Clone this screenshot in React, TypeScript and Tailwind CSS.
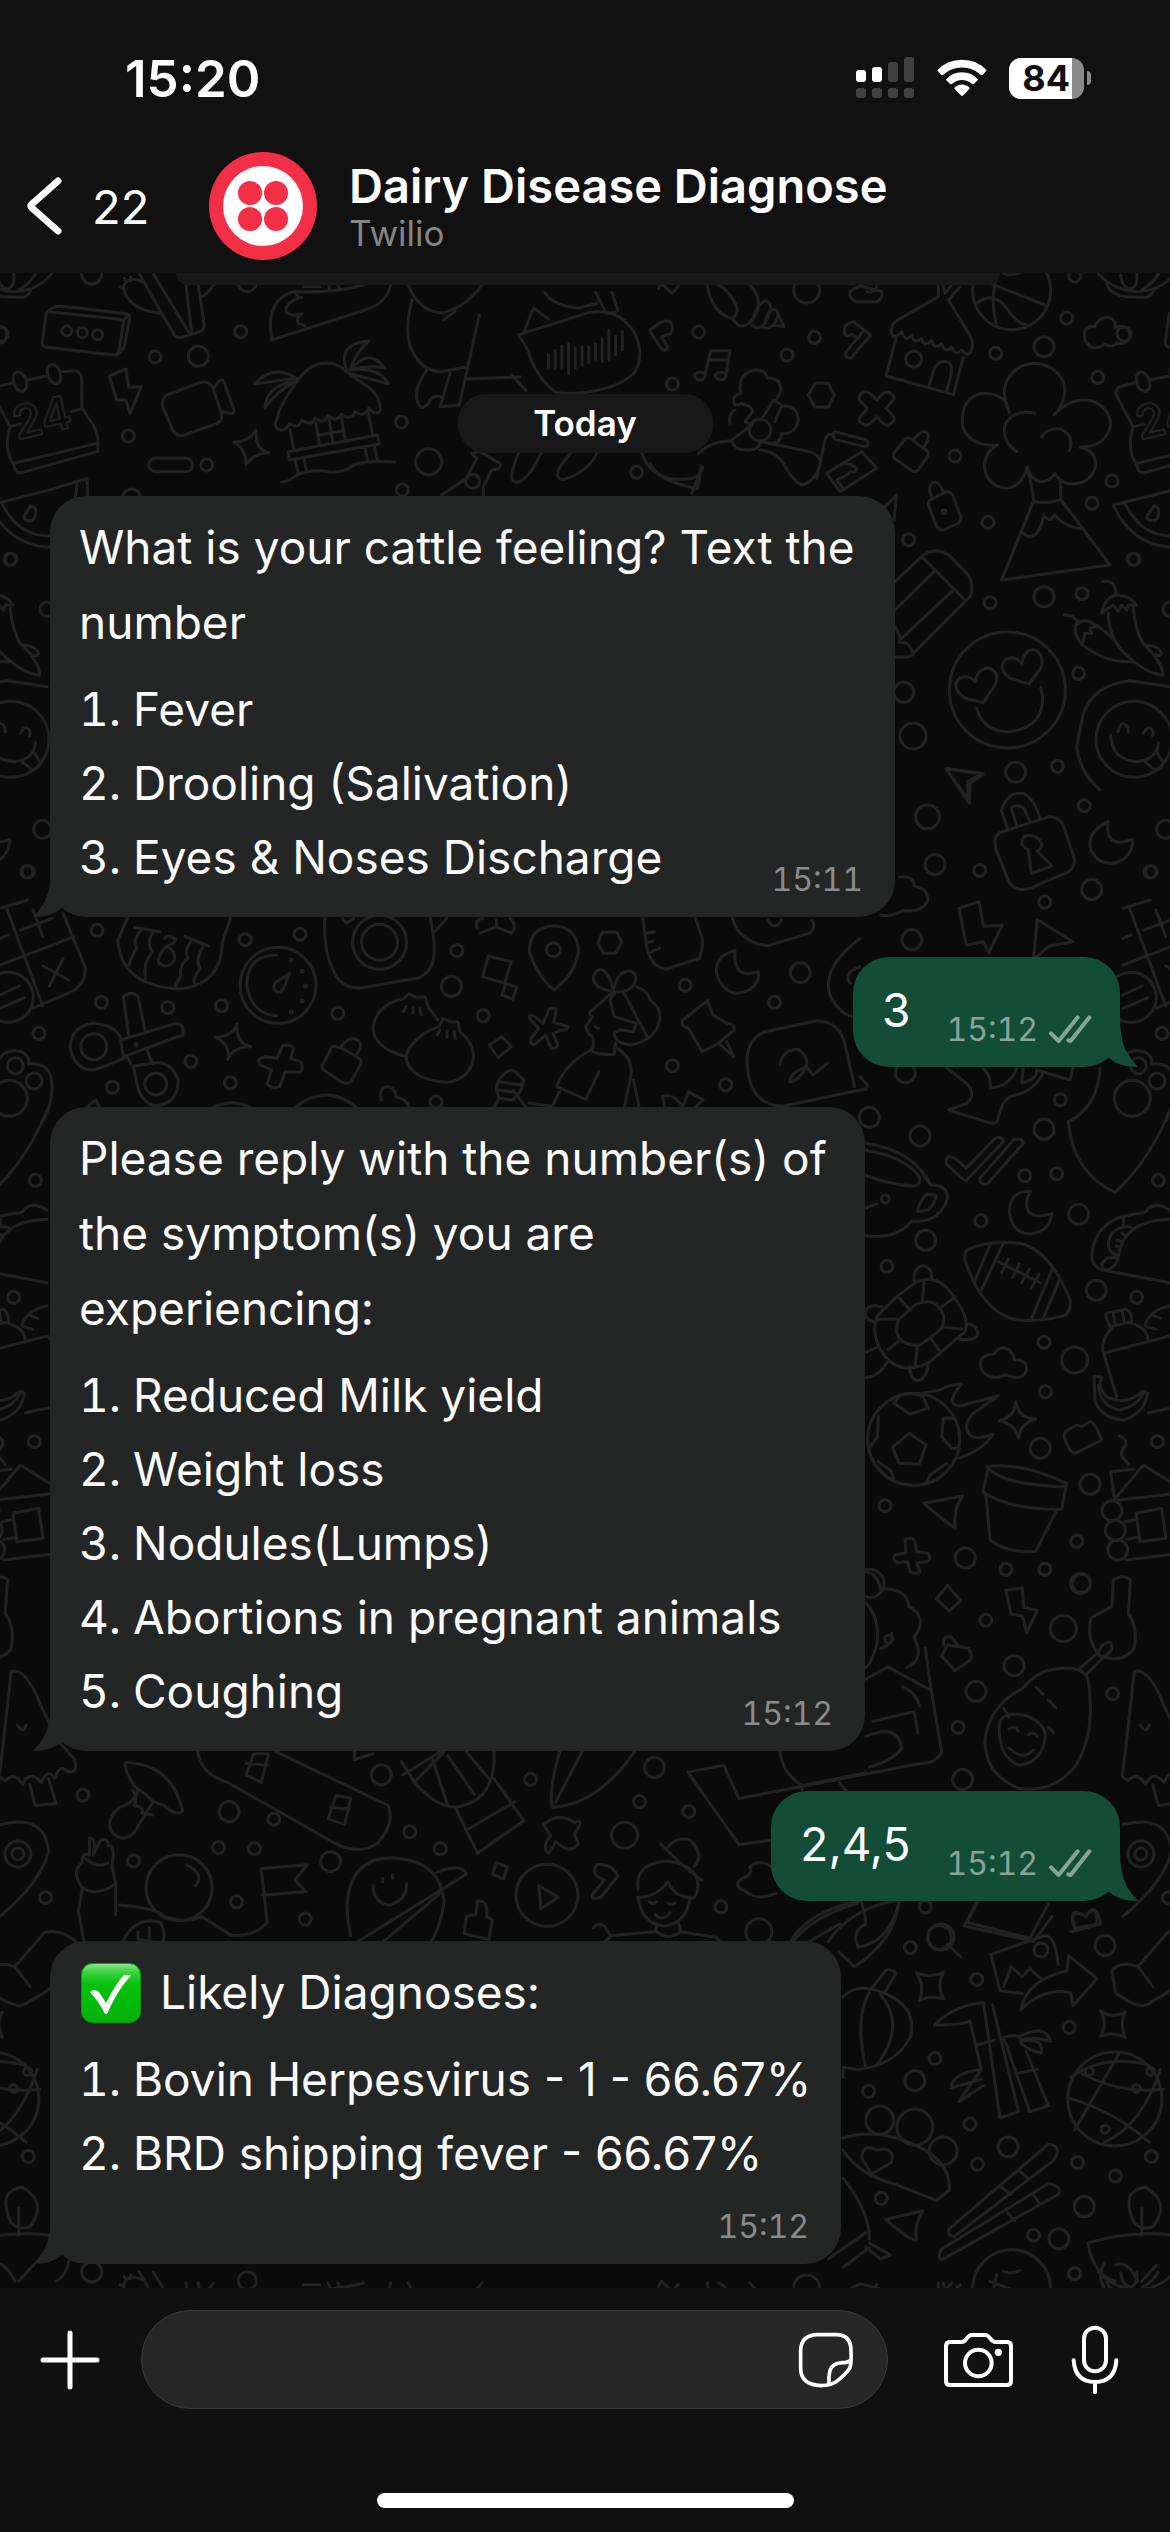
import React from "react";

type Dot = [number, number, number];

type Sheet = {
  x: number;
  y: number;
  sx: number;
  sy: number;
  dots: Dot[];
  paths: string[];
};

const THIRD = 1 / 3;
const TILE_W = 1123;
const TILE_H = 1998;

/* Each sheet is a group of doodles on its own grid; dots are x, y, radius in page units. */
const sheets: Sheet[] = [
  {
    x: 0,
    y: 270,
    sx: THIRD,
    sy: THIRD,
    dots: [
      [275, 12, 10], [3, 192, 7], [200, 183, 5], [247, 188, 5], [293, 194, 5], [722, 185, 6], [465, 261, 6],
      [595, 259, 10], [385, 498, 6], [620, 585, 6], [1204, 456, 6], [1286, 575, 13], [1207, 660, 6],
      [742, 38, 9], [395, 684, 9], [1418, 634, 7],
    ],
    paths: [
      "M145 125L360 148Q372 150 370 160L356 245Q352 256 340 255L138 232Q126 228 127 215L138 135Q140 125 145 125ZM145 122L160 112Q170 107 185 109L380 131Q392 134 388 148L375 220Q370 243 350 255M366 152L388 136",
      "M418 12L520 190Q528 207 548 201L600 185Q615 178 612 160L595 45M460 12L568 190M575 190L558 45M425 35Q385 15 370 50Q380 120 485 130M360 50l12 5M373 25l6 12M392 20l0 12M605 80Q620 75 640 45",
      "M815 210Q795 90 880 65Q1000 70 1090 45M815 210L1110 115Q1160 95 1172 45M885 65Q895 85 905 82Q855 95 858 125Q865 140 905 132Q885 145 895 160L915 168M910 50h50M985 45l5 15M1015 45l3 15",
      "M1225 45Q1260 130 1330 128Q1400 110 1445 45M1365 125L1330 150M1237 90Q1210 180 1235 240Q1270 310 1330 304L1395 292M1438 135L1378 405L1320 410L1350 310M1280 300Q1230 370 1262 412Q1280 415 1290 390Q1300 375 1322 380M1395 328L1560 320",
      "M38 338L-12 351Q-28 365 -15 385L30 470M82 330L138 318M182 305L225 302Q245 305 245 330L246 415L280 465Q300 500 292 545L65 608Q45 612 42 585L28 560Q15 515 30 470L62 462M215 425L246 415M42 580L290 520",
      "M40 320Q45 300 62 308Q82 320 80 350Q75 368 58 362Q38 350 40 320ZM142 297Q147 279 164 285Q184 297 182 327Q177 345 160 339Q140 327 142 297Z",
      "M328 318L378 297L386 352L424 350L390 430L378 390L350 390Z",
      "M500 375L600 338Q625 330 638 352L665 430Q670 450 650 460L555 495Q530 502 518 480L488 410Q485 385 500 375ZM642 355L655 335Q665 325 672 335L702 420Q702 432 690 430L665 425",
      "M835 440Q828 425 890 335Q925 285 965 280Q1010 275 1040 305L1110 355Q1140 380 1142 420Q1130 440 1105 415Q1095 445 1065 425Q1050 455 1025 432Q1010 460 985 437Q970 465 945 445Q935 470 905 450Q895 480 868 460Q855 490 830 475Q820 460 835 440ZM870 480L882 540M1105 430L1118 495M948 460L958 522M988 450L998 515M1025 445L1035 508M955 495L1030 483M865 545L1132 495L1138 522L868 570ZM885 570L895 610M912 565L920 605M1095 530L1102 570M1122 525L1132 568M845 636Q870 635 890 615Q940 595 990 606Q1030 610 1060 585Q1100 570 1185 576",
      "M890 325Q820 280 763 342Q820 335 890 325M885 335Q800 345 795 412Q830 365 885 335M1040 300Q1010 220 1108 213Q1070 240 1050 300Q1110 230 1152 293Q1100 285 1050 300Q1140 290 1165 342Q1110 325 1050 312",
      "M768 480Q765 540 806 548Q760 550 738 584Q738 535 702 517Q750 515 768 480Z",
      "M466 565H558A20 20 0 0 1 558 605H466A20 20 0 0 1 466 565Z",
      "M1325 675L1400 625L1430 565L1415 550L1440 545L1500 580Q1505 595 1490 598L1475 600L1450 650V675",
    ],
  },
  {
    x: 0,
    y: 270,
    sx: 0.7462,
    sy: 0.4464,
    dots: [
      [853, 453, 6], [1361, 1125, 10], [1417, 1112, 6], [1243, 1225, 12], [1453, 1200, 6], [1253, 1332, 10],
      [1313, 1345, 6], [1463, 1388, 10], [1400, 1416, 6], [1222, 1500, 10], [38, 1348, 6], [57, 1253, 9],
      [15, 648, 6], [1541, 1348, 6],
    ],
    paths: [
      "M695 145L790 95Q830 85 850 140Q865 190 850 230Q830 265 780 275Q745 280 740 268Q715 230 708 180L695 145ZM735 190V218M744 180V222M753 170V220M762 165V232M771 175V220M780 172V212M789 172V208M798 165V200M807 155V205M816 135V200M825 148V190M834 138V178",
      "M715 85L702 140M715 85L735 110M685 235L705 270M730 50Q740 80 775 85L800 75M798 50L812 95Q820 100 828 90L820 50",
      "M695 410Q680 470 690 475Q705 480 725 410M800 410Q790 450 755 470Q735 465 765 410M860 410Q870 470 935 490L940 440",
      "M1268 1118L1317 1128L1297 1145V1185Z",
      "M1340 1260L1405 1225Q1420 1225 1425 1245L1440 1320Q1440 1340 1430 1350L1380 1385Q1360 1395 1352 1370L1335 1300Q1330 1270 1340 1260ZM1350 1250L1342 1210Q1350 1170 1370 1172Q1385 1180 1393 1225M1362 1242L1355 1205Q1362 1195 1372 1205L1380 1235M1378 1298Q1365 1290 1372 1270Q1385 1260 1395 1280Q1398 1295 1390 1302L1410 1335L1382 1352Z",
      "M1485 1235Q1455 1260 1462 1300Q1475 1340 1500 1325Q1518 1310 1518 1275Q1480 1300 1485 1235Z",
      "M1285 1430L1312 1415L1318 1470L1343 1468L1325 1530L1318 1505L1295 1512ZM1390 1455L1438 1505L1405 1515L1385 1545Z",
      "M1205 1360Q1225 1355 1225 1380Q1245 1385 1243 1415Q1235 1440 1210 1435Q1195 1450 1180 1445",
    ],
  },
  {
    x: 650,
    y: 270,
    sx: THIRD,
    sy: THIRD,
    dots: [
      [146, 186, 6], [411, 255, 6], [494, 202, 6], [67, 342, 6], [470, 60, 13], [1037, 250, 6], [1250, 144, 6],
      [1182, 230, 10], [1274, 18, 6], [1343, 322, 6], [915, 558, 6], [1386, 633, 6], [1326, 700, 6],
      [1014, 757, 6], [776, 809, 6], [1449, 868, 6], [1020, 998, 6], [1182, 980, 10], [1296, 971, 6],
      [1560, 1018, 7], [761, 1267, 10], [1286, 1210, 6], [789, 1398, 13], [791, 267, 8], [330, 480, 11],
      [1085, 62, 39], [1072, 1260, 58], [1452, 1408, 38], [882, 725, 2],
    ],
    paths: [
      "M0 180Q40 145 60 155Q75 175 62 190L35 200L53 230Q50 245 38 240L0 185M25 55L35 40L65 70L85 50",
      "M172 45Q185 130 245 145Q280 130 240 75Q220 50 205 45M300 45Q345 90 310 145Q290 175 265 165L245 145M310 145Q325 95 350 92Q375 105 345 160Q325 185 305 165M345 160Q350 120 375 118Q395 130 370 165Q355 180 340 172M385 135L402 170L372 165",
      "M165 315L182 242H240L228 318M178 270H235M165 318Q165 330 148 330Q130 325 135 312Q150 302 166 312ZM227 318Q227 330 210 330Q192 325 197 312Q212 302 228 312Z",
      "M600 65Q625 45 640 50L695 65Q700 85 680 95H620Q595 85 600 65M650 65Q670 70 680 50",
      "M585 190Q575 165 610 155L662 195L605 262Q590 270 585 250L622 205L605 192Q590 205 585 190ZM640 180L625 205",
      "M865 45V80L735 155Q715 180 730 200Q750 195 755 185Q765 220 785 195Q790 225 815 205Q820 235 845 212Q850 240 875 222Q885 250 905 232Q915 260 935 240Q955 265 965 240Q975 215 950 180L895 90L930 50M880 45L885 70L905 45M738 205L708 318L910 374L940 262M838 345L855 290Q875 265 900 280Q912 295 890 360",
      "M1020 40L1185 105M1040 20Q1020 90 1038 160M980 100Q1030 60 1070 115Q1100 160 1130 165M1060 10Q1075 20 1110 8",
      "M1305 210Q1295 165 1335 170Q1350 135 1385 145Q1400 160 1395 172Q1435 160 1440 195Q1435 225 1400 220Q1385 235 1365 222Q1325 250 1305 210Z",
      "M272 370Q260 310 315 300Q350 300 352 325Q395 320 392 365Q380 385 378 395M272 370Q240 380 255 405Q265 405 275 400L300 410L308 425L285 455L305 465L245 510Q250 540 290 540Q330 540 330 515M240 460Q235 430 255 420M340 440L370 390L395 405L375 455M395 410Q440 400 445 450Q435 495 395 490Q395 520 360 520L335 515",
      "M145 550Q190 510 245 513M335 515L480 545Q510 555 512 580L500 610Q480 640 455 645Q430 635 400 580Q380 545 330 540M0 580Q20 630 100 628Q140 625 145 615L158 592L125 670M500 625L525 510Q530 490 550 492M555 485L650 510Q660 525 645 530L555 508Q545 495 555 485ZM530 610L635 545L680 595L570 665ZM560 590Q590 570 620 595Q620 610 600 605Q595 615 560 630L580 655",
      "M495 340H535L553 376L535 411H495L475 376Z",
      "M640 365Q655 360 680 390Q705 360 718 368Q738 380 730 388L708 415L732 442Q735 455 715 467Q700 465 680 440Q655 470 645 465Q620 455 630 442L652 415L628 390Q625 375 640 365Z",
      "M765 508L730 552Q728 562 740 570L790 605Q800 606 805 600L835 555Q835 545 825 538L785 508Q775 500 765 508ZM790 508L808 490Q825 478 835 492Q838 505 820 535",
      "M1078 428Q1050 365 1075 325Q1105 280 1155 280Q1215 285 1240 335Q1255 390 1212 435Q1260 380 1325 392Q1380 415 1382 465Q1370 530 1290 532Q1345 545 1335 595Q1315 650 1250 640Q1225 630 1215 610Q1200 635 1170 635Q1140 625 1132 592Q1115 650 1070 655Q1010 650 1003 590Q1005 545 1042 525Q960 530 938 470Q930 385 995 370Q1050 370 1070 400M1100 545Q1055 515 1065 465Q1090 415 1155 430M1175 500Q1195 470 1235 478Q1275 500 1258 542M1135 600L1152 695Q1200 702 1232 688V630M1150 695L1055 930L1380 885L1232 688M1120 790Q1140 810 1160 790Q1180 760 1180 735Q1195 755 1205 745Q1215 735 1215 735Q1240 770 1300 778",
      "M840 690L890 665Q905 665 910 680L932 740Q935 755 920 762L880 780Q862 780 858 765L835 705Q835 695 840 690ZM848 688L838 660Q840 635 858 637Q870 640 882 668",
      "M735 935L820 855Q860 830 900 858L955 915Q975 950 960 980L780 1160L735 1162M820 865L945 990M735 1020L852 905M755 1105L908 962M735 1070Q755 1100 748 1118Q785 1115 788 1155",
      "M700 715L740 675L732 750",
      "M1000 1298L945 1285Q900 1250 928 1225Q955 1212 975 1235Q985 1190 1020 1195Q1050 1210 1035 1245ZM1138 1242L1080 1225Q1040 1195 1068 1168Q1095 1155 1115 1180Q1125 1135 1155 1140Q1185 1155 1172 1195ZM980 1315Q1000 1385 1075 1385Q1180 1375 1178 1280L1172 1252",
      "M1560 1250L1440 1232Q1330 1245 1300 1330L1280 1430Q1290 1510 1350 1560M1382 1395Q1385 1470 1460 1475Q1520 1470 1526 1418M1405 1385Q1410 1360 1420 1360Q1435 1365 1435 1385M1480 1390Q1490 1370 1500 1374Q1512 1380 1508 1398M1485 1475L1515 1500Q1540 1495 1538 1475L1520 1445",
      "M1357 935Q1395 925 1398 972M1355 1028Q1365 980 1400 975Q1440 975 1458 1005L1435 1005L1430 1020L1415 1005L1405 1025L1390 1005ZM1375 1030Q1375 1110 1440 1165Q1490 1210 1538 1216Q1540 1180 1480 1120Q1455 1080 1450 1015M1243 1035Q1275 1035 1285 1060M1297 1125Q1265 1085 1280 1060Q1310 1040 1340 1070L1320 1075L1325 1090L1305 1090ZM1305 1130Q1370 1180 1450 1175M1340 1065L1390 1105M1490 1125Q1530 1130 1535 1150Q1530 1160 1515 1155",
      "M1390 705L1560 662L1680 626L1685 730Q1650 820 1560 832Q1440 820 1390 705ZM1425 700Q1470 795 1560 798Q1640 780 1650 640M1512 707L1490 740Q1495 755 1515 752Q1530 740 1525 715Z",
      "M1345 12Q1390 60 1460 65Q1530 65 1575 10M1370 40Q1380 75 1430 80L1490 82Q1505 75 1510 62M1412 15Q1415 50 1440 58Q1465 50 1460 12M1475 60Q1510 40 1525 12",
      "M888 1495L1000 1512L960 1540L958 1600Z",
    ],
  },
  {
    x: 0,
    y: 900,
    sx: 0.5485,
    sy: THIRD,
    dots: [
      [177, 91, 6], [447, 119, 6], [547, 103, 6], [185, 307, 6], [306, 323, 6], [404, 317, 6], [71, 400, 6],
      [348, 484, 6], [420, 548, 6], [205, 562, 6], [616, 340, 6], [833, 152, 6], [823, 259, 10], [881, 347, 6],
      [1249, 256, 6], [1459, 218, 10], [1412, 307, 6], [1226, 497, 6], [1323, 554, 6], [795, 606, 6],
      [1009, 149, 7], [507, 256, 38], [692, 127, 27], [692, 127, 18], [171, 440, 13], [284, 552, 11],
      [28, 497, 8], [62, 543, 8], [17, 595, 18], [15, 292, 25], [531, 180, 1], [551, 213, 1], [557, 258, 1],
      [551, 303, 1], [531, 336, 1], [248, 433, 1],
    ],
    paths: [
      "M0 25L50 0M12 25L78 318M0 195L135 110M115 40L155 200Q158 250 130 275L60 325M38 90L95 55M60 30L78 110M78 198L125 240M115 175L90 258M0 285L35 258M0 325L45 293M0 115L15 105",
      "M232 55L215 120Q220 260 330 267Q405 250 405 130L420 55M245 82L292 95M258 90Q240 120 250 145Q240 165 235 195M280 95Q265 130 278 155Q260 190 265 235M337 110L380 138M350 120Q335 150 342 175Q325 200 330 225L320 258M370 140Q355 180 365 205Q350 235 355 258M300 115Q305 100 320 118Q320 130 303 140Q285 170 290 190Q305 210 318 180Q320 150 303 140",
      "M505 165Q450 165 450 258Q460 345 505 347M528 220L502 248Q495 270 507 277Q515 275 518 262Z",
      "M592 55Q590 150 605 200Q620 270 660 263L760 235Q800 215 790 110L785 55M790 100L815 55M625 55L632 70L645 55",
      "M225 290Q240 270 252 290L265 400M225 290L235 410M220 420L320 370Q338 375 333 405L225 470ZM220 415Q210 375 170 370Q130 380 128 440Q135 510 170 510Q185 505 232 470L238 490M268 450L278 490M243 498L250 555Q260 615 285 617Q325 610 325 540Q310 480 280 490Z",
      "M432 372Q430 430 457 440Q425 440 415 478Q420 430 392 412Q425 410 432 372Z",
      "M515 437Q530 430 535 445L530 475L548 485Q555 510 545 517L520 515L510 560Q495 570 487 550L495 510L475 495Q465 475 485 470L505 475Z",
      "M605 440Q620 435 658 480Q660 490 655 500L640 545Q632 555 622 545L590 510Q585 500 590 490ZM622 440Q635 410 650 418Q665 430 648 468",
      "M742 470Q680 445 680 380Q690 310 735 297L745 282L760 292L775 290L780 320L798 360M800 380L808 355L820 365L835 365L838 395Q865 430 863 475Q855 540 815 547Q745 540 740 470Q750 410 800 380M740 320l-5 15M753 322v18M765 325l3 20M802 390l-5 15M815 392v18M828 395l2 20",
      "M890 168L932 185L920 250L880 230ZM922 250L942 262L935 298L915 285ZM915 410L932 440L908 473L892 435Z",
      "M1010 77Q965 80 965 155Q980 230 1010 270Q1050 220 1055 150Q1050 80 1010 77Z",
      "M1098 97H1125L1133 128L1122 160H1100L1090 130Z",
      "M1172 55L1180 150Q1190 205 1215 207L1275 175Q1285 130 1278 105L1268 55M1178 100L1193 95M1182 127L1190 123M1187 155L1203 145",
      "M1335 55Q1350 130 1400 137L1475 100Q1490 80 1480 60M1400 60Q1412 95 1425 60M870 85Q865 60 880 55M875 100L905 80L932 100Q945 80 930 55M905 80V60",
      "M1340 152Q1300 170 1307 225Q1320 280 1345 280Q1385 270 1383 215Q1335 240 1340 152Z",
      "M1118 275Q1080 265 1082 230Q1088 200 1100 212Q1115 230 1118 275Q1125 210 1150 213Q1165 225 1155 255Q1145 280 1118 275ZM1118 275L1080 330Q1070 340 1080 350L1068 380Q1070 400 1080 410Q1085 440 1078 450M1078 450Q1085 465 1120 463L1122 430M1160 260Q1180 270 1185 300Q1205 320 1203 360Q1195 420 1150 435Q1120 430 1120 400L1130 390L1155 395L1160 370L1120 350L1112 300L1120 280M1138 280L1180 410M1078 450Q1030 490 1015 560L1068 598L1092 515M1120 440Q1155 470 1150 530L1138 625M1020 575L1005 625M1155 540L1165 620M1085 380l6 5",
      "M990 370L1002 325Q1015 320 1013 335L1010 368L1035 380Q1035 390 1025 390L1008 400L1017 435Q1010 455 1002 435L995 405L975 433Q965 435 968 415L982 385L965 355Q965 340 975 350Z",
      "M1290 302L1245 360Q1240 380 1255 385L1280 455L1310 430L1338 390Q1340 370 1325 370L1300 345ZM1310 430L1338 470L1325 425",
      "M1395 395L1490 362Q1530 365 1540 430L1558 560M1395 395Q1360 420 1362 490Q1365 570 1390 600Q1410 620 1430 618L1568 570M1422 495Q1425 450 1455 448Q1475 470 1470 500Q1440 520 1440 545Q1455 545 1470 500L1482 525L1510 488",
      "M0 475Q10 445 40 455Q55 470 52 492Q95 485 95 560Q95 610 80 660M155 625L175 600L182 625M390 620Q425 595 460 625M540 620Q595 550 650 622M695 600Q690 565 705 560Q720 560 722 590Q745 600 745 625",
      "M920 520Q935 500 945 525L955 540L950 570L935 600L910 595L905 570Q905 540 920 520ZM910 545L950 555M905 570L935 575M900 625L910 595M935 570L960 625M965 610L1005 618M1212 625L1208 590Q1225 575 1245 620L1255 575L1282 600L1265 625",
      "M1568 115Q1500 200 1512 280Q1530 350 1568 355M1550 250Q1535 220 1568 200",
    ],
  },
  {
    x: 860,
    y: 1060,
    sx: THIRD,
    sy: THIRD,
    dots: [
      [136, 38, 10], [601, 119, 6], [552, 208, 10], [28, 172, 10], [180, 228, 10], [494, 347, 6], [590, 341, 6],
      [895, 361, 6], [363, 482, 6], [656, 463, 10], [197, 541, 10], [81, 619, 6], [709, 691, 10], [830, 712, 6],
      [552, 847, 6], [644, 900, 13], [556, 995, 6], [541, 1165, 10], [892, 1145, 6], [690, 1273, 10],
      [75, 1337, 6], [316, 1494, 10], [650, 1444, 6], [438, 1528, 6], [555, 1528, 6], [664, 1570, 9],
      [161, 1138, 46], [76, 417, 4], [756, 1352, 10], [766, 1411, 10], [773, 1470, 10], [30, 1570, 14],
    ],
    paths: [
      "M262 25L320 70Q350 105 320 130L265 150L395 190Q415 190 415 170Q430 110 460 107Q530 90 550 35M370 25Q395 50 390 85Q450 80 470 25M490 25L485 68Q530 60 530 30L630 60L638 25M0 50L22 75L18 88L0 90",
      "M720 25Q715 140 625 185Q640 340 765 397Q870 300 930 150",
      "M265 290Q280 285 318 325L405 235Q425 225 430 245L318 362Q310 362 260 312Q255 300 265 290ZM460 240Q485 230 490 250L382 372Q360 378 360 355Z",
      "M15 250Q160 270 212 375Q265 375 262 415Q240 490 155 483Q110 540 15 527M15 270Q130 290 175 345Q190 375 160 378Q90 375 15 345M200 403L228 405Q230 420 205 450L172 455Q180 420 200 403ZM15 445L50 432M212 375L190 345",
      "M512 395Q450 390 448 455Q455 520 510 522Q570 515 576 460Q500 485 500 430Q500 410 512 395Z",
      "M320 570Q380 540 480 550Q570 570 630 720Q635 765 600 770Q520 790 450 775Q360 740 315 600Q312 580 320 570ZM390 555L343 665M430 550L362 695M578 625L515 775M600 655L550 775M415 605L540 668M445 597L425 638M478 612L458 652M508 628L485 668M538 642L515 682",
      "M695 590Q700 500 785 470L835 460Q860 460 865 445Q890 425 930 450M695 590Q700 630 740 632L930 668M775 590Q790 480 930 478M740 632Q710 620 740 595L775 590Q770 620 740 632M820 505Q790 490 755 520Q730 570 770 585M790 470V495M770 540l15 5M785 520l12 8M768 558l12 4",
      "M50 770L110 710L170 665Q240 640 280 710Q330 770 315 815L210 905Q130 950 75 890Q30 830 50 770ZM115 780L165 735Q225 705 250 765Q255 800 235 815L180 855Q120 860 110 815Q110 795 115 780ZM192 668L187 722M118 715L150 750M52 778H113M85 868L118 842M165 918L172 858M240 875L212 835M305 807L250 802M285 710L240 745M162 665Q160 620 190 617Q220 625 213 658M65 740Q20 730 15 760Q20 785 50 785M318 792Q350 790 353 820Q350 845 300 838M150 920Q150 960 175 962Q200 955 205 912M0 885L55 860M15 952Q55 955 85 900",
      "M365 930Q350 885 400 883Q420 855 445 868Q462 880 462 900Q500 895 500 930Q490 960 455 950Q440 940 415 952Q380 955 365 930Z",
      "M190 998Q240 995 260 980Q290 970 305 972Q280 1000 275 1025Q290 1045 320 1032L415 1008L340 1060Q310 1090 325 1120Q345 1145 400 1122Q370 1170 295 1195M102 1030L120 1005Q160 995 190 1010L203 1045L150 1062ZM97 1162L148 1120L198 1155L178 1213L118 1210ZM55 1070L52 1130L32 1160M250 1075H280M250 1075L245 1130L275 1165H298M55 1205L95 1235L102 1260M200 1268L210 1245L260 1210",
      "M467 1025Q475 1075 527 1077Q480 1090 476 1135Q465 1090 418 1082Q465 1070 467 1025Z",
      "M615 1115L650 1095L665 1100L690 1085Q705 1085 725 1140L645 1180Q630 1180 612 1130Z",
      "M778 1128Q800 1135 798 1155Q775 1180 790 1195L805 1213",
      "M380 1220Q480 1205 620 1270Q620 1285 570 1278Q430 1270 385 1225L368 1295Q450 1350 605 1348L620 1270M378 1305L390 1440Q440 1480 527 1475L590 1350",
      "M192 1330L308 1308Q280 1345 285 1402Q275 1402 192 1330Z",
      "M135 1437Q160 1430 165 1445L170 1475L205 1480Q215 1500 200 1505L170 1508L180 1535Q165 1545 150 1535L143 1505L110 1508Q95 1495 105 1485L138 1478Z",
      "M752 1235L822 1228M752 1235L762 1310M760 1322L850 1215L935 1268L1020 1310M755 1322L1000 1295M795 1385L830 1378M800 1438L840 1432M800 1500L1000 1475M828 1360L905 1345L918 1435L840 1445Z",
      "M738 770Q735 755 760 755L800 748Q815 755 815 785L750 800ZM760 760L765 790M787 752L792 785M755 805Q725 835 728 870L770 1010M810 790Q860 800 865 840M738 878L930 828L1050 930L1010 1025M865 1058L1000 1030M855 795Q870 750 930 738M875 765l28 10M860 800l28 8M702 950H725Q712 985 740 1010Q790 1035 835 1005Q850 985 862 1000Q855 1060 790 1080Q720 1075 705 1020ZM715 975Q720 1040 780 1050Q830 1040 850 1000",
    ],
  },
  {
    x: 0,
    y: 1350,
    sx: 0.7462,
    sy: 0.3827,
    dots: [
      [1348, 573, 6], [1400, 573, 6], [1448, 610, 10], [1321, 706, 6], [1425, 728, 13], [1359, 825, 10],
      [1308, 892, 10], [1491, 898, 6], [1284, 986, 6], [1290, 1122, 10], [111, 1163, 6], [307, 1206, 10],
      [367, 1226, 6], [293, 1300, 6], [341, 1303, 6], [179, 1335, 6], [511, 1110, 10], [549, 1259, 6],
      [590, 1303, 6], [711, 1122, 6], [857, 1180, 6], [877, 1091, 10], [923, 1206, 6], [837, 1268, 13],
      [443, 1337, 10], [317, 1442, 6], [409, 1487, 6], [240, 1405, 33], [24, 1317, 13], [24, 1317, 6],
      [966, 1455, 6], [1240, 1455, 6], [1259, 1535, 12], [1017, 1520, 13], [733, 1425, 31], [61, 1431, 6],
      [1191, 755, 4],
    ],
    paths: [
      "M1270 615L1287 655L1272 682L1255 650ZM1348 628L1370 622L1372 672L1390 680L1376 740L1370 695L1355 690ZM1270 770L1298 780Q1305 800 1300 810L1280 838L1262 800ZM1265 770Q1262 745 1275 750L1283 770",
      "M1410 835Q1450 820 1458 860Q1470 1000 1440 1090Q1410 1160 1365 1145Q1320 1110 1320 1020Q1325 930 1370 885Q1390 840 1410 835ZM1340 970Q1345 945 1375 955Q1405 980 1400 1020Q1395 1080 1365 1085Q1335 1060 1340 970M1345 935L1352 960M1405 985L1412 1000M1352 990q8-10 12 5M1378 1005q8-10 12 5M1352 1040Q1370 1075 1385 1045M1445 835L1472 790Q1478 760 1488 765Q1495 785 1480 800L1455 850M1388 880L1398 900M1405 915L1415 935",
      "M1462 700L1490 670L1492 600Q1505 585 1515 600L1512 690Q1525 720 1520 780Q1505 820 1475 800Q1455 760 1462 700Z",
      "M1520 840Q1540 830 1560 930L1580 1015L1605 1070Q1610 1110 1595 1100Q1585 1080 1578 1120Q1570 1090 1560 1130Q1545 1095 1535 1135Q1525 1100 1512 1125Q1500 1115 1505 1100L1515 930ZM1545 1135L1552 1190L1580 1185L1570 1120M1528 980q8 25 12 0",
      "M1160 580Q1175 580 1180 625Q1215 620 1218 670Q1245 700 1225 750Q1240 810 1215 830M1195 740Q1198 770 1180 780M1160 660Q1180 700 1175 770Q1168 820 1160 830M1160 860L1190 828L1248 890L1262 1050Q1255 1080 1235 1080L990 1172L970 1085L922 1103L990 1292L1040 1280M1240 780L1248 890M1170 970L1225 945L1230 1000M1160 1010Q1205 975 1208 1040Q1200 1070 1165 1090M1045 1050Q1050 1110 1075 1138L1160 1105M1125 1130L1135 1155M1075 1138V1150M1210 880Q1230 900 1232 930",
      "M265 1050Q270 1110 305 1130L450 1290Q480 1320 505 1290Q530 1240 520 1190L370 1050M330 1110L340 1055H360L350 1130ZM330 1080L358 1085M330 1110L350 1130M440 1225L450 1165L470 1170L462 1240ZM443 1195L468 1200M440 1225L462 1240",
      "M168 1078Q230 1080 245 1205Q235 1220 220 1190L205 1180L195 1160L180 1140Q165 1090 168 1078ZM205 1215L190 1210Q195 1195 180 1190Q185 1170 178 1150M185 1150Q180 1185 160 1195Q140 1230 150 1260Q165 1290 180 1260L205 1180",
      "M540 1110L590 1050M538 1075Q570 1190 610 1195Q665 1180 662 1050M540 1080L555 1130L595 1050M580 1070L600 1190M600 1060L635 1160M625 1050L655 1120M610 1195L640 1315L702 1230L662 1120M625 1255L690 1180",
      "M750 1050Q735 1150 740 1195Q800 1190 850 1050M745 1180L780 1050M475 1050V1070L500 1055",
      "M740 1225Q755 1215 770 1235Q785 1220 770 1265L775 1290Q765 1320 745 1285L735 1315Q725 1300 738 1270L728 1240Z",
      "M120 1275Q130 1275 125 1320L135 1280Q145 1275 145 1295Q155 1290 150 1350L155 1395Q130 1430 110 1405Q95 1360 110 1340Q110 1310 120 1320ZM110 1410L105 1465Q110 1520 115 1568M155 1400L155 1475M115 1330Q130 1355 145 1340M160 1450Q215 1460 220 1480Q250 1500 270 1480L310 1530Q345 1530 358 1495L350 1355L412 1345L395 1385L410 1415L352 1425M165 1545Q180 1480 215 1495Q225 1530 215 1568M165 1545V1568M185 1520v20l18 5M200 1510v45M250 1345Q275 1370 262 1400",
      "M465 1450Q470 1320 530 1328Q590 1335 595 1440Q590 1520 570 1568M465 1450Q465 1490 470 1530M480 1545L625 1370Q620 1340 585 1365M590 1420L500 1568M500 1400Q500 1445 522 1450Q545 1440 545 1395M513 1380v10M526 1370v10M665 1340L680 1350L675 1382L660 1370Z",
      "M722 1400L748 1430L725 1460ZM640 1440Q655 1435 652 1480L660 1490L655 1540L622 1525L625 1480L638 1475ZM800 1345Q820 1340 828 1375L805 1430Q790 1440 795 1420L810 1385Q790 1370 800 1345Z",
      "M855 1410Q850 1340 895 1335Q940 1350 935 1410Q930 1440 925 1430M885 1290Q915 1350 940 1385M895 1300Q905 1270 925 1280Q945 1320 930 1350M895 1390Q880 1430 855 1430Q860 1500 890 1505Q920 1500 925 1430Q905 1430 895 1390M870 1442q5 8 10 0M895 1445q5 8 10 0M878 1475q10 20 20-5M880 1505L878 1520L820 1530L800 1568M910 1500L912 1520L960 1535L975 1568M795 1510Q800 1495 810 1505L818 1530L805 1560M880 1520Q895 1545 912 1520",
      "M1040 1360Q1020 1325 1005 1350Q1010 1370 995 1380Q980 1400 1000 1415Q1015 1440 1040 1420M1065 1540Q1090 1480 1150 1445M1205 1445Q1190 1550 1150 1560Q1140 1520 1160 1500Q1160 1480 1155 1445M1065 1568L1125 1500M1310 1445L1292 1505L1385 1545L1410 1480M1440 1500Q1430 1450 1455 1480Q1470 1440 1475 1500L1435 1520",
      "M0 1240Q60 1210 65 1310Q55 1390 0 1480",
    ],
  },
  {
    x: 0,
    y: 1900,
    sx: 0.7462,
    sy: 0.4034,
    dots: [
      [1220, 118, 6], [1261, 92, 13], [1309, 197, 6], [1481, 113, 10], [1395, 124, 7], [1433, 316, 6],
      [1253, 393, 6], [1226, 448, 10], [1164, 474, 6], [1300, 555, 6], [1310, 655, 6], [1351, 612, 10],
      [1444, 651, 6], [1495, 684, 6], [1453, 760, 10], [1181, 740, 6], [1385, 831, 6], [1419, 840, 10],
      [1179, 546, 14], [1226, 563, 18], [1264, 622, 14], [1494, 493, 47], [1543, 636, 6], [1440, 926, 6],
      [1542, 425, 4], [1460, 425, 4], [1523, 467, 4], [1481, 568, 4],
    ],
    paths: [
      "M1270 110L1287 140M1328 135L1400 88Q1415 90 1418 160M1328 135L1340 225L1370 232M1345 215L1355 165L1370 190L1380 170L1395 195M1368 272Q1375 200 1430 175L1432 138L1470 195L1438 262L1435 230Q1400 215 1368 272Z",
      "M1130 240Q1150 200 1190 235Q1230 270 1220 340Q1200 410 1150 420L1130 415M1168 220L1188 172Q1205 175 1198 190L1185 232M1180 235Q1215 310 1175 410M1165 230Q1145 290 1160 415M1130 420V440",
      "M1228 180Q1245 195 1264 180Q1255 215 1264 245Q1245 235 1232 250Q1240 215 1228 180ZM1475 275Q1490 295 1508 278Q1500 305 1508 340Q1490 325 1475 338Q1485 305 1475 275Z",
      "M1252 310Q1280 260 1318 255L1340 540L1365 525L1330 260M1252 310Q1290 310 1300 300L1315 420Q1275 430 1275 465L1315 445M1315 420L1285 500L1318 460M1308 360L1332 348M1345 340L1380 525L1405 510L1375 375M1345 340Q1370 330 1368 350M1362 430L1390 420M1365 340Q1400 305 1408 350Q1380 335 1368 350Q1400 340 1395 380Q1380 375 1368 355",
      "M1130 590Q1180 560 1240 620Q1275 660 1272 720L1255 745L1200 705Q1150 680 1130 620M1155 640Q1155 600 1175 620Q1200 610 1195 650L1168 680Z",
      "M1405 605Q1425 610 1412 645L1278 835Q1268 830 1272 815ZM1405 703Q1425 710 1418 730L1262 892Q1255 885 1262 865ZM1365 670L1378 690M1340 710L1355 730M1385 730L1392 750M1350 775L1360 795",
      "M1187 792L1237 770Q1225 800 1228 843Q1220 845 1187 792ZM1130 690Q1165 770 1165 840M1110 890L1160 825M1130 910L1165 862M1165 850L1193 880L1180 890L1160 860",
      "M1430 490Q1490 520 1540 600M1450 430Q1500 480 1558 470M1500 380L1440 570M1555 420Q1530 560 1480 600M1435 440Q1480 380 1540 410",
      "M1520 800Q1500 720 1535 712Q1570 750 1545 810Q1530 820 1520 800M1530 765V830M1458 850Q1530 810 1600 840M1458 850Q1465 930 1495 945M1600 840Q1600 930 1580 945M1495 905Q1510 890 1525 945M1550 905L1530 945M1480 900Q1470 935 1480 962",
      "M1490 175Q1500 150 1525 165L1565 80Q1590 70 1610 110Q1600 200 1545 250Q1530 280 1495 230ZM1525 165L1545 215",
      "M1060 103Q1080 30 1155 0M1110 103Q1140 20 1205 0Q1200 100 1145 165L1125 130M1295 55L1310 0M1295 55L1380 95L1405 10M1440 70Q1430 20 1455 40Q1470 0 1470 60Z",
    ],
  },
];

function Wallpaper() {
  return (
    <svg
      aria-hidden="true"
      className="absolute inset-0 h-full w-full"
      viewBox="0 273 1170 2015"
      preserveAspectRatio="xMidYMin slice"
    >
      <defs>
        <g id="doodles" fill="none" stroke="#222222" strokeWidth="3" strokeLinecap="round" strokeLinejoin="round">
          {sheets.map((s, i) => (
            <g key={i} transform={`translate(${s.x} ${s.y}) scale(${s.sx} ${s.sy})`}>
              {s.dots.map(([x, y, r], j) => (
                <ellipse key={j} cx={x} cy={y} rx={r / s.sx} ry={r / s.sy} vectorEffect="non-scaling-stroke" />
              ))}
              {s.paths.map((d, j) => (
                <path key={j} d={d} vectorEffect="non-scaling-stroke" />
              ))}
            </g>
          ))}
          <text x="17" y="440" fontSize="46" fontWeight="600" fontFamily="Inter, sans-serif" strokeWidth="2" transform="rotate(-13 17 440)">
            24
          </text>
        </g>
      </defs>
      <use href="#doodles" />
      <use href="#doodles" x={-TILE_W} />
      <use href="#doodles" x={TILE_W} />
      <use href="#doodles" y={TILE_H} />
    </svg>
  );
}

function StatusIcons() {
  return (
    <div className="flex items-center">
      <svg width="58" height="42" viewBox="0 0 58 42" aria-label="Signal">
        <rect x="0" y="13" width="10" height="12" rx="3" fill="#fff" />
        <rect x="16" y="10" width="10" height="15" rx="3" fill="#fff" />
        <rect x="32" y="5" width="10" height="20" rx="3" fill="#404040" />
        <rect x="48" y="0" width="10" height="25" rx="3" fill="#404040" />
        {[0, 16, 32, 48].map((x) => (
          <rect key={x} x={x} y="31" width="10" height="10" rx="3" fill="#404040" />
        ))}
      </svg>
      <svg className="ml-[22px]" width="52" height="40" viewBox="405 82 160 120" aria-label="Wi-Fi" fill="#fff">
        <path d="M409 118Q440 86 485 86Q530 86 561 118L550 131Q546 135 541 131Q518 110 485 110Q452 110 429 131Q424 135 420 131Z" />
        <path d="M435 147Q455 124 485 124Q515 124 535 147L523 159Q519 163 514 159Q502 148 485 148Q468 148 456 159Q451 163 447 159Z" />
        <path d="M461 173Q471 162 485 162Q499 162 509 173Q509 176 488 196Q485 199 482 196Q461 176 461 173Z" />
      </svg>
      <div className="ml-[21px] flex h-[41px] w-[75px] rounded-[12px] bg-[#8a8a8a]">
        <div className="w-[63px] rounded-l-[12px] bg-white pr-[2px] text-right text-[36px] leading-[41px] font-bold text-[#111]">
          84
        </div>
      </div>
      <div className="ml-[3px] h-[14px] w-[4px] rounded-r-full bg-[#8a8a8a]" />
    </div>
  );
}

function Tail({ side, color }: { side: "left" | "right"; color: string }) {
  return (
    <svg
      aria-hidden="true"
      width="36"
      height="50"
      viewBox="0 0 36 50"
      fill={color}
      className={side === "left" ? "absolute bottom-0 -left-[17px] -scale-x-100" : "absolute -right-[18px] bottom-0"}
    >
      <path d="M0 0H18Q18 22 24 34Q29 43 36 50Q17 50 7 41L0 36Z" />
    </svg>
  );
}

function Received({ time, width, below, children }: { time: string; width: string; below?: boolean; children: React.ReactNode }) {
  return (
    <article className={`relative ml-[50px] self-start rounded-[36px] bg-[#242626] px-[29px] pt-[14px] ${below ? "pb-[74px]" : "pb-[23px]"} ${width}`}>
      <Tail side="left" color="#242626" />
      <div className="relative">{children}</div>
      <time className="absolute right-[32px] bottom-[19px] text-[32px] leading-[36px] text-[#8a8c8c] tabular-nums">
        {time}
      </time>
    </article>
  );
}

function Sent({ time, children }: { time: string; children: React.ReactNode }) {
  return (
    <article className="relative mr-[50px] flex h-[110px] items-end self-end rounded-[36px] bg-[#144d37] pr-[28px] pl-[29px]">
      <Tail side="right" color="#144d37" />
      <p className="mb-[19px] text-[46px] leading-[75px] text-white">{children}</p>
      <time className="mb-[19px] ml-[36px] text-[32px] leading-[36px] text-[#84a598] tabular-nums">{time}</time>
      <svg className="mb-[21px] ml-[10px]" width="44" height="32" viewBox="625 223 132 96" aria-label="Delivered" fill="none" stroke="#84a598" strokeWidth="12" strokeLinecap="round" strokeLinejoin="round">
        <path d="M634 281L657 304L714 233M686 302L693 304L749 233" />
      </svg>
    </article>
  );
}

function NumberedList({ items }: { items: string[] }) {
  return (
    <ol className="mt-3 text-[46px] leading-[74px] text-[#fafafa]">
      {items.map((item, i) => (
        <li key={item} className="flex">
          <span className="w-[54px] shrink-0 tabular-nums">{i + 1}.</span>
          <span className="whitespace-nowrap">{item}</span>
        </li>
      ))}
    </ol>
  );
}

export default function App() {
  return (
    <div className="flex min-h-screen w-full flex-col bg-[#0a0a0a] font-[Inter,sans-serif]">
      <header className="bg-[#111111] pb-[13px]">
        <div className="flex h-[152px] items-center justify-between pt-[4px] pr-[79px] pl-[125px]">
          <time className="text-[51px] leading-none font-semibold text-white">15:20</time>
          <StatusIcons />
        </div>
        <div className="flex h-[108px] items-center">
          <button type="button" className="ml-[26px] flex items-center text-white" aria-label="Back, 22 unread chats">
            <svg width="37" height="60" viewBox="0 0 37 60" fill="none" stroke="#fff" strokeWidth="7" strokeLinecap="round" strokeLinejoin="round">
              <path d="M32 5L6 28Q4 30 6 32L32 55" />
            </svg>
            <span className="ml-[29px] w-[117px] text-left text-[47px] leading-none">22</span>
          </button>
          <svg className="shrink-0" width="108" height="108" viewBox="0 0 108 108" aria-label="Twilio logo">
            <circle cx="54" cy="54" r="54" fill="#f22f46" />
            <circle cx="54" cy="54" r="40" fill="#fff" />
            {[41, 67].map((x) =>
              [41, 67].map((y) => <circle key={`${x}-${y}`} cx={x} cy={y} r="12" fill="#f22f46" />),
            )}
          </svg>
          <div className="ml-8">
            <h1 className="text-[47px] leading-[54px] font-semibold text-white">Dairy Disease Diagnose</h1>
            <p className="text-[35px] leading-[40px] text-[#858585]">Twilio</p>
          </div>
        </div>
      </header>

      <main className="relative flex flex-1 flex-col gap-10 overflow-hidden pb-[23px]">
        <Wallpaper />
        <div className="relative mr-[170px] ml-[176px] h-[12px] rounded-b-[12px] bg-[#181818]" />
        <h2 className="relative mt-[69px] mb-[3px] flex h-[59px] w-[255px] items-center justify-center self-center rounded-[28px] bg-[#181818] text-[35px] font-semibold text-white">
          Today
        </h2>

        <Received time="15:11" width="w-[845px]">
          <p className="text-[46px] leading-[75px] text-[#fafafa]">What is your cattle feeling? Text the number</p>
          <NumberedList items={["Fever", "Drooling (Salivation)", "Eyes & Noses Discharge"]} />
        </Received>

        <Sent time="15:12">3</Sent>

        <Received time="15:12" width="w-[815px]">
          <p className="text-[46px] leading-[75px] text-[#fafafa]">
            Please reply with the number(s) of the symptom(s) you are experiencing:
          </p>
          <NumberedList
            items={["Reduced Milk yield", "Weight loss", "Nodules(Lumps)", "Abortions in pregnant animals", "Coughing"]}
          />
        </Received>

        <Sent time="15:12">2,4,5</Sent>

        <Received time="15:12" width="w-[791px]" below>
          <p className="flex items-center text-[46px] leading-[75px] text-[#fafafa]">
            <svg className="mr-[19px] ml-[2px]" width="60" height="60" viewBox="0 0 60 60" role="img" aria-label="Check mark">
              <defs>
                <linearGradient id="tick-fill" x1="0" y1="0" x2="0" y2="1">
                  <stop offset="0" stopColor="#8be88b" />
                  <stop offset="0.14" stopColor="#3fd343" />
                  <stop offset="0.35" stopColor="#05c20a" />
                  <stop offset="1" stopColor="#04b00a" />
                </linearGradient>
              </defs>
              <rect x="0.5" y="0.5" width="59" height="59" rx="11" fill="url(#tick-fill)" stroke="#0b9a12" />
              <path d="M9 29Q13 25 18 29L25 40Q35 20 43 12H50Q36 28 26 51H24Q18 39 9 29Z" fill="#fff" />
            </svg>
            Likely Diagnoses:
          </p>
          <NumberedList items={["Bovin Herpesvirus - 1 - 66.67%", "BRD shipping fever - 66.67%"]} />
        </Received>
      </main>

      <footer className="flex h-[244px] flex-col items-center justify-between bg-[#101010] pt-[22px] pb-6">
        <form className="flex w-full items-center" onSubmit={(e) => e.preventDefault()}>
          <button type="button" aria-label="Attach" className="mr-[41px] ml-10 shrink-0">
            <svg width="60" height="60" viewBox="0 0 60 60" stroke="#fff" strokeWidth="5" strokeLinecap="round">
              <path d="M30 3V57M3 30H57" />
            </svg>
          </button>
          <div className="flex h-[99px] min-w-0 flex-1 items-center rounded-[50px] border border-[#3a3a3a] bg-[#272727] pr-[32px] pl-9">
            <input type="text" aria-label="Message" className="h-full w-0 min-w-0 flex-1 bg-transparent text-[46px] text-white outline-none" />
            <button type="button" aria-label="Stickers" className="shrink-0">
              <svg width="58" height="58" viewBox="140 124 174 174" fill="none" stroke="#fff" strokeWidth="11" strokeLinecap="round" strokeLinejoin="round">
                <path d="M200 135H258Q302 135 302 184Q304 222 298 236Q288 252 262 273Q244 288 212 288Q151 286 151 236V184Q151 137 200 135Z" />
                <path d="M236 282Q234 262 239 242Q247 220 276 219Q293 219 300 212" />
              </svg>
            </button>
          </div>
          <button type="button" aria-label="Camera" className="ml-[55px] shrink-0">
            <svg width="71" height="58" viewBox="579 120 213 174" fill="none" stroke="#fff" strokeWidth="12" strokeLinecap="round" strokeLinejoin="round">
              <path d="M600 153H634Q643 153 649 144Q657 132 665 132H707Q713 132 722 144Q729 153 737 153H772Q783 153 783 165V270Q783 282 771 282H600Q588 282 588 270V165Q588 153 600 153Z" />
              <circle cx="685" cy="216" r="40" />
              <circle cx="745" cy="184" r="5" fill="#fff" />
            </svg>
          </button>
          <button type="button" aria-label="Voice message" className="mr-[50px] ml-[56px] shrink-0">
            <svg width="50" height="72" viewBox="960 97 150 216" fill="none" stroke="#fff" strokeWidth="12" strokeLinecap="round" strokeLinejoin="round">
              <rect x="1002" y="108" width="66" height="131" rx="33" />
              <path d="M971 206Q975 270 1035 271Q1095 270 1099 206M1035 271V302" />
            </svg>
          </button>
        </form>
        <div className="h-[15px] w-[417px] rounded-full bg-white" />
      </footer>
    </div>
  );
}
